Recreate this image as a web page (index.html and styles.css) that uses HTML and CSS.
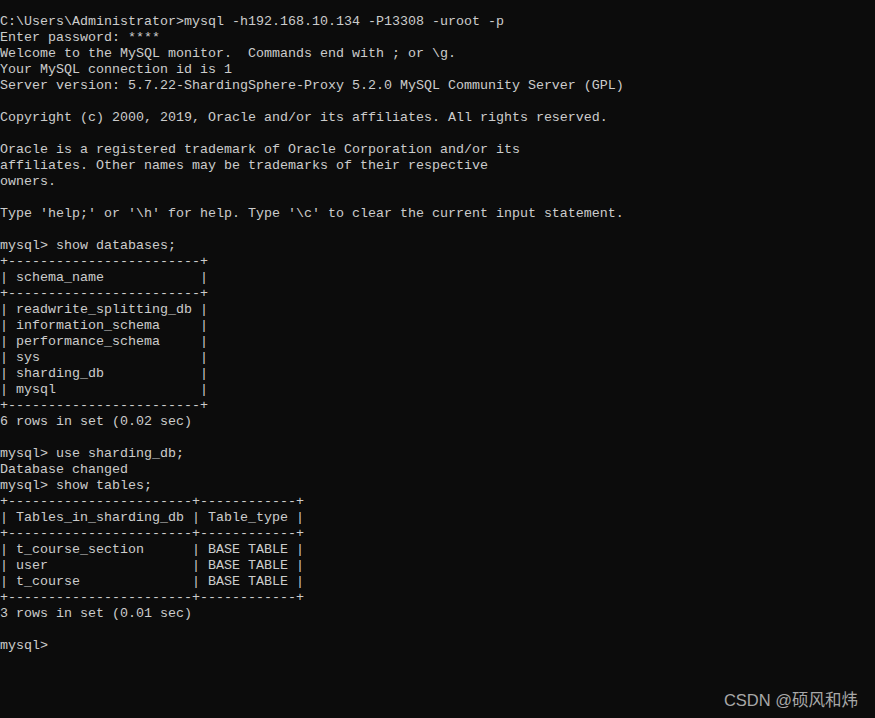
FILE: index.html
```html
<!DOCTYPE html>
<html lang="zh">
<head>
<meta charset="utf-8">
<title>mysql</title>
<link rel="stylesheet" href="styles.css">
</head>
<body>
<div class="console">
<pre class="output">C:\Users\Administrator&gt;mysql -h192.168.10.134 -P13308 -uroot -p
Enter password: ****
Welcome to the MySQL monitor.  Commands end with ; or \g.
Your MySQL connection id is 1
Server version: 5.7.22-ShardingSphere-Proxy 5.2.0 MySQL Community Server (GPL)

Copyright (c) 2000, 2019, Oracle and/or its affiliates. All rights reserved.

Oracle is a registered trademark of Oracle Corporation and/or its
affiliates. Other names may be trademarks of their respective
owners.

Type 'help;' or '\h' for help. Type '\c' to clear the current input statement.

mysql&gt; show databases;
+------------------------+
| schema_name            |
+------------------------+
| readwrite_splitting_db |
| information_schema     |
| performance_schema     |
| sys                    |
| sharding_db            |
| mysql                  |
+------------------------+
6 rows in set (0.02 sec)

mysql&gt; use sharding_db;
Database changed
mysql&gt; show tables;
+-----------------------+------------+
| Tables_in_sharding_db | Table_type |
+-----------------------+------------+
| t_course_section      | BASE TABLE |
| user                  | BASE TABLE |
| t_course              | BASE TABLE |
+-----------------------+------------+
3 rows in set (0.01 sec)

mysql&gt;</pre>
<div class="watermark">CSDN @硕风和炜</div>
</div>
</body>
</html>
```
FILE: styles.css
```css
html, body {
  margin: 0;
  padding: 0;
  background: #0c0c0c;
}
.console {
  position: relative;
  width: 875px;
  height: 718px;
  overflow: hidden;
  background: #0c0c0c;
}
.output {
  margin: 0;
  padding: 14px 0 0 0;
  font-family: "Liberation Mono", "DejaVu Sans Mono", monospace;
  font-size: 13.33px;
  line-height: 16px;
  color: #cccccc;
  white-space: pre;
}
.watermark {
  position: absolute;
  right: 17px;
  bottom: 8px;
  font-family: "Liberation Sans", "Noto Sans CJK SC", sans-serif;
  font-size: 16.5px;
  line-height: 20px;
  color: #a8a8a8;
}
```
